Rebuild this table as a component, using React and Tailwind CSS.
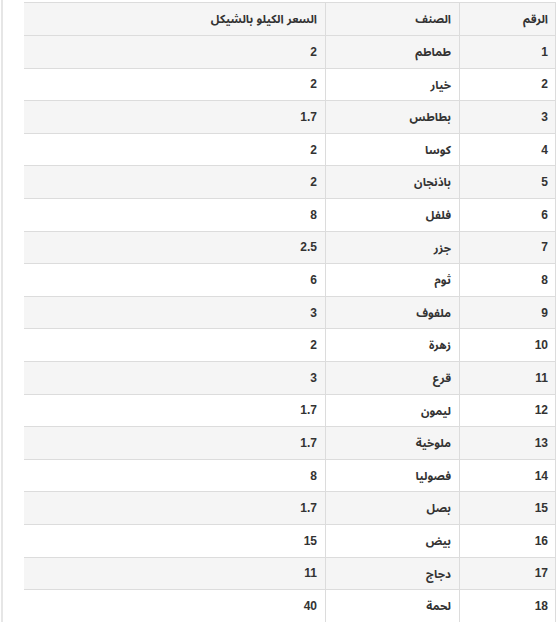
import React from "react";

const rows = [
  ["1", "طماطم", "2"],
  ["2", "خيار", "2"],
  ["3", "بطاطس", "1.7"],
  ["4", "كوسا", "2"],
  ["5", "باذنجان", "2"],
  ["6", "فلفل", "8"],
  ["7", "جزر", "2.5"],
  ["8", "ثوم", "6"],
  ["9", "ملفوف", "3"],
  ["10", "زهرة", "2"],
  ["11", "قرع", "3"],
  ["12", "ليمون", "1.7"],
  ["13", "ملوخية", "1.7"],
  ["14", "فصوليا", "8"],
  ["15", "بصل", "1.7"],
  ["16", "بيض", "15"],
  ["17", "دجاج", "11"],
  ["18", "لحمة", "40"],
];

function Row({ cells, striped, header }) {
  const ar = "text-[11.6px]";
  return (
    <div
      className={
        "grid grid-cols-[96px_134px_1fr] border-b border-[#dcdcdc] " +
        (header ? "h-[33px] " : "h-[32.6px] ") +
        (striped ? "bg-[#f5f5f5]" : "bg-white")
      }
    >
      <div className={"flex items-center pr-[7px] pl-2 border-l border-[#dcdcdc] " + (header ? ar : "")}>{cells[0]}</div>
      <div className={"flex items-center px-2 border-l border-[#dcdcdc] " + ar}>{cells[1]}</div>
      <div className={"flex items-center px-2 " + (header ? ar : "")}>{cells[2]}</div>
    </div>
  );
}

export default function App() {
  return (
    <div className="w-[556px] h-[622px] overflow-hidden bg-white flex">
      <div className="w-[3px] shrink-0 border-l-2 border-[#e6e6e6] ml-px" />
      <div className="flex-1 pl-[20px] pt-[2px]">
        <div
          dir="rtl"
          className="w-[532px] border-t border-r border-[#dcdcdc] text-[#333] font-bold text-[12px] leading-none"
          style={{ fontFamily: '"Liberation Sans", Tahoma, "Noto Sans Arabic", "DejaVu Sans", sans-serif' }}
        >
          <Row cells={["الرقم", "الصنف", "السعر الكيلو بالشيكل"]} striped header />
          {rows.map((r, i) => (
            <Row key={r[0]} cells={r} striped={i % 2 === 0} />
          ))}
        </div>
      </div>
    </div>
  );
}
